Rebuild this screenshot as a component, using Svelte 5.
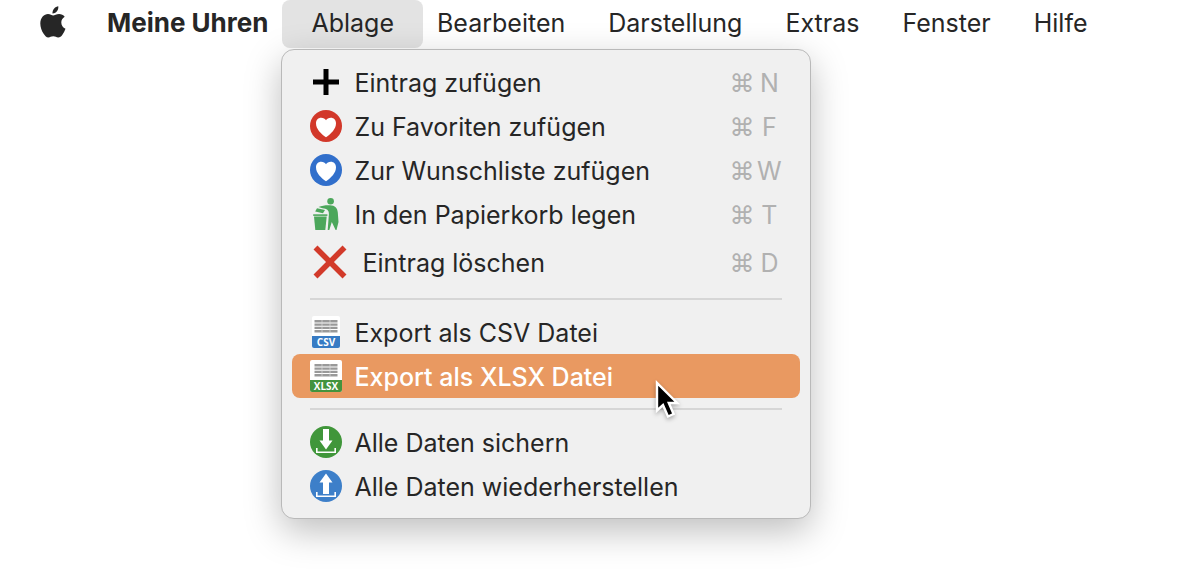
<script lang="ts">
  // Menu bar with the "Ablage" menu pulled down.

  type Entry = {
    icon: string;
    label: string;
    key?: string;
  };

  const menus = ["Ablage", "Bearbeiten", "Darstellung", "Extras", "Fenster", "Hilfe"];

  const groups: Entry[][] = [
    [
      { icon: "plus", label: "Eintrag zufügen", key: "N" },
      { icon: "favorite", label: "Zu Favoriten zufügen", key: "F" },
      { icon: "wish", label: "Zur Wunschliste zufügen", key: "W" },
      { icon: "bin", label: "In den Papierkorb legen", key: "T" },
      { icon: "cross", label: "Eintrag löschen", key: "D" },
    ],
    [
      { icon: "csv", label: "Export als CSV Datei" },
      { icon: "xlsx", label: "Export als XLSX Datei" },
    ],
    [
      { icon: "save", label: "Alle Daten sichern" },
      { icon: "restore", label: "Alle Daten wiederherstellen" },
    ],
  ];

  let open = $state("Ablage");
  let active = $state("xlsx");
</script>

{#snippet sheet(x: number, w: number, color: string, text: string)}
  <rect {x} y="0" width={w} height="32" rx="2" fill="#fff" />
  <path d="M{x} 20h{w}v10a2 2 0 0 1-2 2H{x + 2}a2 2 0 0 1-2-2z" fill={color} />
  <path d="M4.5 5.3h23M4.5 8.6h23M4.5 11.9h23M4.5 15.2h23" stroke="#999" stroke-width="2.4" />
  <path d="M12 4v12.5M20 4v12.5" stroke="#ddd" stroke-width=".7" />
  <text x="16" y="29.5" text-anchor="middle" class="tag">{text}</text>
{/snippet}

{#snippet icon(name: string)}
  {#if name === "cross"}
    <svg width="40" height="40" viewBox="0 0 40 40" aria-hidden="true">
      <path d="M5.5 5.5l29 29M34.5 5.5l-29 29" stroke="#d23a2a" stroke-width="5.6" />
    </svg>
  {:else}
    <svg width="32" height="32" viewBox="0 0 32 32" aria-hidden="true">
      {#if name === "plus"}
        <path d="M16 3v26M3 16h26" stroke="#000" stroke-width="5" />
      {:else if name === "favorite" || name === "wish"}
        <circle cx="16" cy="16" r="16" fill={name === "wish" ? "#316fcb" : "#d2382a"} />
        <path d="M16 27.300C11 23.800 6 19.200 6 13.300c0-3.500 2.200-5.600 5.200-5.600 2.100 0 4 1 4.800 2.600.8-1.600 2.700-2.600 4.800-2.600 3 0 5.200 2.100 5.200 5.600 0 5.900-5 10.500-10 14z" fill="#fff" />
      {:else if name === "bin"}
        <g fill="#4ca75b">
          <circle cx="20.600" cy="3.300" r="3.300" />
          <path d="M4 18.500h12.700L15.300 32H5.300z" />
          <path d="M3.200 16.300h14.200v1.600H3.200z" />
          <path d="M7 10.300l8 1.700-2 3.300-7.800-1.800z" />
          <path d="M8.500 8.900c3.500-1.300 7.500-1.800 11.500-1.600 5.200.2 7.200 2.500 7.800 7.200l.7 9.500-2 8h-.9l-3.800-8-2.500 8h-1.600l1.200-16c.2-3.700-2.200-5.500-6.400-5.800z" />
        </g>
      {:else if name === "csv"}
        {@render sheet(2, 28, "#377bc4", "CSV")}
      {:else if name === "xlsx"}
        {@render sheet(0, 32, "#43933e", "XLSX")}
      {:else if name === "save"}
        <circle cx="16" cy="16" r="16" fill="#40963a" />
        <path d="M13 3h6v11.500h3.500L16 23.500l-6.500-9H13z" fill="#fff" />
        <path d="M6.800 22v4.300h18.400V22" fill="none" stroke="#fff" stroke-width="1.6" />
      {:else}
        <circle cx="16" cy="16" r="16" fill="#3d7fc9" />
        <path d="M13 24h6V12.500h3.500L16 3.500l-6.500 9H13z" fill="#fff" />
        <path d="M6.800 22v4.300h18.400V22" fill="none" stroke="#fff" stroke-width="1.6" />
      {/if}
    </svg>
  {/if}
{/snippet}

<main>
  <nav class="menubar" aria-label="Menüleiste">
    <button class="apple" aria-label="Apple">
      <svg width="26" height="32" viewBox="0 0 26 32" fill="#262626" aria-hidden="true">
        <path d="M18.300.3c.3 2.400-.7 4.300-1.800 5.500-1.100 1.200-2.500 1.800-4 1.700-.2-2 .6-3.900 1.700-5.100C15.300 1.200 16.900.4 18.300.3z" />
        <path d="M24.700 10.700c-2.300 1.500-3.400 3.300-3.400 5.800 0 2.900 1.600 5.200 4.200 6.200-.7 2.100-1.700 4-3.100 6-1.200 1.700-2.400 2.800-4.200 2.800-2 0-2.600-1.200-4.900-1.200-2.400 0-3.100 1.200-5 1.200-1.900 0-3.200-1.500-4.500-3.400C1.700 25.100.3 21.400.3 17.600.3 11.700 4.100 8.100 8 8.100c2.200 0 3.900 1.500 5.200 1.500 1.300 0 3.300-1.600 5.900-1.600 2.200 0 4.300.9 5.600 2.700z" />
      </svg>
    </button>
    <button class="title app">Meine Uhren</button>
    {#each menus as name}
      <div class="slot">
        <button
          class="title"
          class:is-open={open === name}
          aria-haspopup="menu"
          aria-expanded={open === name}
          onclick={() => (open = open === name ? "" : name)}
        >{name}</button>
        {#if name === "Ablage" && open === name}
          <div class="menu" role="menu">
            {#each groups as entries, i}
              {#if i > 0}<hr />{/if}
              {#each entries as e}
                <button
                  class="entry"
                  class:is-tall={e.icon === "cross"}
                  class:is-active={active === e.icon}
                  role="menuitem"
                  onmouseenter={() => (active = e.icon)}
                >
                  {@render icon(e.icon)}
                  <span class="label">{e.label}</span>
                  {#if e.key}
                    <kbd><span>⌘</span><span class="key">{e.key}</span></kbd>
                  {/if}
                  {#if e.icon === "xlsx"}
                    <svg class="pointer" width="28" height="42" viewBox="0 0 28 42" aria-hidden="true">
                      <path d="M3 3v27.5l6-5.400 5 11.400 5.600-2.500-4.800-11h8.400z" fill="#000" stroke="#fff" stroke-width="2.4" />
                    </svg>
                  {/if}
                </button>
              {/each}
            {/each}
          </div>
        {/if}
      </div>
    {/each}
  </nav>
</main>

<style>
  :global(body) {
    background: #fff;
  }
  main {
    min-height: 100vh;
  }
  button {
    font: inherit;
    color: inherit;
    background: none;
    border: 0;
    padding: 0;
    white-space: nowrap;
  }
  .menubar {
    display: flex;
    height: 48px;
    padding-left: 40px;
    font-family: Inter, "Liberation Sans", sans-serif;
    font-size: 25px;
    line-height: 44px;
    color: #262626;
  }
  .apple {
    display: flex;
    align-items: center;
    margin-right: 12px;
    padding-bottom: 4px;
  }
  .title {
    height: 48px;
    padding: 0 29px 2px;
    border-radius: 8px;
  }
  .app {
    font-size: 26px;
    font-weight: 700;
    margin-right: -8px;
  }
  .slot {
    position: relative;
    margin: 0 -8px 0 -7px;
  }
  .is-open {
    background: #e3e3e3;
  }
  .menu {
    position: absolute;
    top: 49px;
    left: -1px;
    z-index: 1;
    box-sizing: border-box;
    width: 530px;
    padding: 10px;
    background: #f0f0f0;
    border: 1px solid #b9b9b9;
    border-radius: 13px;
    box-shadow: 0 12px 36px rgba(0, 0, 0, 0.26);
  }
  .entry {
    position: relative;
    display: flex;
    align-items: center;
    gap: 12px;
    width: 100%;
    min-height: 44px;
    padding: 0 18px;
    border-radius: 8px;
    line-height: 42px;
    text-align: left;
  }
  .is-tall {
    min-height: 52px;
  }
  .entry.is-active {
    background: #e99961;
    color: #fff;
    font-weight: 500;
  }
  .label {
    flex: 1;
    padding-top: 2px;
  }
  kbd {
    display: flex;
    gap: 2px;
    padding-top: 2px;
    font-family: inherit;
    color: #b1b1b1;
  }
  .key {
    width: 26px;
    text-align: center;
  }
  hr {
    height: 2px;
    margin: 10px 18px;
    border: 0;
    background: #d6d6d6;
  }
  .tag {
    font: 700 10px "Open Sans", "Noto Sans", sans-serif;
    fill: #fff;
  }
  .pointer {
    position: absolute;
    top: 26px;
    left: 362px;
    z-index: 1;
    filter: drop-shadow(0 2px 2px rgba(0, 0, 0, 0.3));
  }
</style>
